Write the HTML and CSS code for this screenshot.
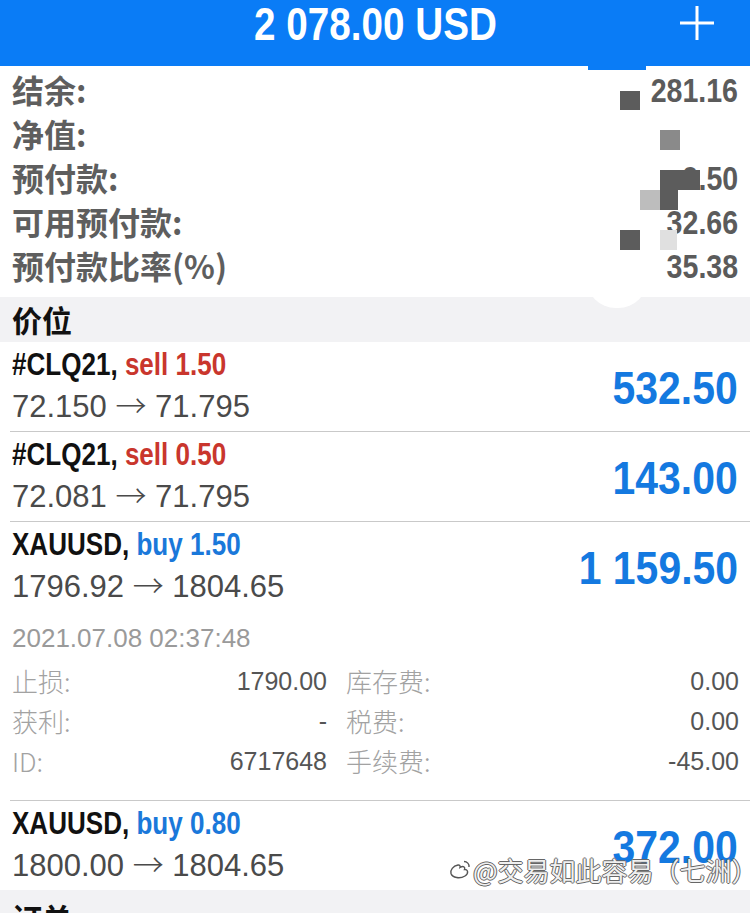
FILE: index.html
```html
<!DOCTYPE html>
<html lang="zh-CN">
<head>
<meta charset="utf-8">
<title>MT5</title>
<link rel="stylesheet" href="styles.css">
</head>
<body>
<div class="page">
  <header class="topbar">
    <div></div>
    <div class="balance"><span class="cn cn-c">2 078.00 USD</span></div>
    <div class="plus-wrap">
      <svg class="plus" width="36" height="36" viewBox="0 0 36 36"><path d="M18 1V35M1 18H35" stroke="#fff" stroke-width="3" fill="none"/></svg>
    </div>
  </header>

  <section class="summary">
    <div class="srow"><span class="slabel">结余:</span><span class="sval"><span class="cn cn-r">281.16</span></span></div>
    <div class="srow"><span class="slabel">净值:</span><span class="sval"></span></div>
    <div class="srow"><span class="slabel">预付款:</span><span class="sval"><span class="cn cn-r">9.50</span></span></div>
    <div class="srow"><span class="slabel">可用预付款:</span><span class="sval"><span class="cn cn-r">32.66</span></span></div>
    <div class="srow"><span class="slabel">预付款比率(%)</span><span class="sval"><span class="cn cn-r">35.38</span></span></div>
    <div class="mask"></div>
    <div class="mask-tab"></div>
    <div class="px px1"></div>
    <div class="px px2"></div>
    <div class="px px3"></div>
    <div class="px px4"></div>
    <div class="px px5"></div>
    <div class="px px6"></div>
    <div class="px px7"></div>
  </section>

  <div class="section-bar">价位</div>

  <div class="pos">
    <div class="pos-main">
      <div class="pos-left">
        <div class="pos-title"><span class="cn">#CLQ21, <span class="sell">sell 1.50</span></span></div>
        <div class="pos-price">72.150 <span class="arr">→</span> 71.795</div>
      </div>
      <div class="pos-profit"><span class="cn cn-r">532.50</span></div>
    </div>
  </div>

  <div class="pos">
    <div class="pos-main">
      <div class="pos-left">
        <div class="pos-title"><span class="cn">#CLQ21, <span class="sell">sell 0.50</span></span></div>
        <div class="pos-price">72.081 <span class="arr">→</span> 71.795</div>
      </div>
      <div class="pos-profit"><span class="cn cn-r">143.00</span></div>
    </div>
  </div>

  <div class="pos expanded">
    <div class="pos-main">
      <div class="pos-left">
        <div class="pos-title"><span class="cn">XAUUSD, <span class="buy">buy 1.50</span></span></div>
        <div class="pos-price">1796.92 <span class="arr">→</span> 1804.65</div>
      </div>
      <div class="pos-profit"><span class="cn cn-r">1 159.50</span></div>
    </div>
    <div class="pos-date">2021.07.08 02:37:48</div>
    <div class="details">
      <div class="dcell"><span class="dl">止损:</span><span class="dv">1790.00</span></div>
      <div class="dcell"><span class="dl">库存费:</span><span class="dv">0.00</span></div>
      <div class="dcell"><span class="dl">获利:</span><span class="dv">-</span></div>
      <div class="dcell"><span class="dl">税费:</span><span class="dv">0.00</span></div>
      <div class="dcell"><span class="dl">ID:</span><span class="dv">6717648</span></div>
      <div class="dcell"><span class="dl">手续费:</span><span class="dv">-45.00</span></div>
    </div>
  </div>

  <div class="pos last">
    <div class="pos-main">
      <div class="pos-left">
        <div class="pos-title"><span class="cn">XAUUSD, <span class="buy">buy 0.80</span></span></div>
        <div class="pos-price">1800.00 <span class="arr">→</span> 1804.65</div>
      </div>
      <div class="pos-profit"><span class="cn cn-r">372.00</span></div>
    </div>
    <div class="watermark">
      <svg class="wb" width="24" height="22" viewBox="0 0 24 22"><path d="M10 6C5 7 2 11 3 14.5 4.5 19 12 20 17 17 21 14.5 20 10 16.5 10.5 17.5 8 15.5 6.5 12 8.5 12.5 6.5 11.5 5.8 10 6Z" fill="none" stroke="#555" stroke-width="1.4"/><path d="M16 2.5C19 2.5 21.5 5 21 8" fill="none" stroke="#555" stroke-width="1.4"/></svg>
      <span>@交易如此容易（七洲）</span>
    </div>
  </div>

  <div class="section-bar bottom">订单</div>
</div>
</body>
</html>
```

FILE: styles.css
```css
html, body {
  margin: 0;
  padding: 0;
  background: #fff;
}
.page {
  width: 750px;
  height: 913px;
  overflow: hidden;
  position: relative;
  font-family: "Liberation Sans", "Noto Sans CJK SC", sans-serif;
}
/* condensed bold face emulation */
.cn {
  display: inline-block;
  transform: scaleX(0.84);
  transform-origin: left center;
  white-space: nowrap;
}
.cn-r { transform-origin: right center; }
.cn-c { transform-origin: center center; }

.topbar {
  height: 66px;
  background: #0a7cf6;
  display: grid;
  grid-template-columns: 1fr auto 1fr;
  align-items: start;
}
.balance {
  color: #fff;
  font-weight: 700;
  font-size: 46px;
  line-height: 48px;
}
.plus-wrap {
  display: flex;
  justify-content: flex-end;
  padding-right: 35px;
  padding-top: 5px;
}
.plus { display: block; }
.summary {
  position: relative;
  padding: 1px 12px 10px 12px;
}
.srow {
  display: flex;
  justify-content: space-between;
  align-items: center;
  height: 44px;
}
.slabel {
  font-family: "Noto Sans CJK SC", sans-serif;
  font-weight: 700;
  font-size: 32px;
  color: #5e5e5e;
}
.sval {
  font-weight: 700;
  font-size: 34px;
  color: #5b5b5b;
  padding-top: 3px;
}
.mask {
  position: absolute;
  left: 586px;
  top: 0;
  width: 62px;
  height: 242px;
  background: #fff;
  border-radius: 0 0 30px 30px;
}
.mask-tab {
  position: absolute;
  left: 588px;
  top: -1px;
  width: 58px;
  height: 5px;
  background: #0a7cf6;
}
.px { position: absolute; }
.px1 { left: 620px; top: 25px; width: 20px; height: 19px; background: #5c5c5c; }
.px2 { left: 660px; top: 64px; width: 20px; height: 20px; background: #8a8a8a; }
.px3 { left: 660px; top: 104px; width: 40px; height: 20px; background: #5c5c5c; }
.px4 { left: 660px; top: 124px; width: 18px; height: 20px; background: #5c5c5c; }
.px5 { left: 640px; top: 124px; width: 20px; height: 20px; background: #bdbdbd; }
.px6 { left: 620px; top: 164px; width: 20px; height: 20px; background: #5c5c5c; }
.px7 { left: 660px; top: 164px; width: 17px; height: 20px; background: #e0e0e0; }

.section-bar {
  background: #f2f2f4;
  height: 45px;
  line-height: 45px;
  padding-left: 12px;
  font-family: "Noto Sans CJK SC", sans-serif;
  font-weight: 700;
  font-size: 30px;
  color: #111;
}
.section-bar.bottom {
  line-height: 54px;
}
.pos {
  position: relative;
  margin-left: 10px;
  border-bottom: 1px solid #c9c9c9;
}
.pos.last {
  border-bottom: none;
}
.pos-main {
  display: flex;
  justify-content: space-between;
  align-items: center;
  height: 89px;
  padding-right: 12px;
}
.pos-left {
  padding-left: 2px;
  padding-top: 1px;
}
.pos-title {
  font-weight: 700;
  font-size: 31px;
  line-height: 36px;
  color: #111;
}
.sell { color: #c9362d; }
.buy { color: #1a78da; }
.pos-price {
  font-size: 31px;
  line-height: 42px;
  color: #4a4a4a;
}
.arr {
  font-family: "Noto Sans CJK SC", sans-serif;
  font-weight: 300;
  font-size: 31px;
}
.pos-profit {
  font-weight: 700;
  font-size: 46px;
  color: #1479e0;
  padding-top: 2px;
}
.pos-profit .cn {
  transform: scaleX(0.89);
}
.pos-date {
  padding: 7px 0 0 2px;
  height: 43px;
  line-height: 40px;
  font-size: 26px;
  color: #9a9a9a;
}
.details {
  display: grid;
  grid-template-columns: 315px 1fr;
  column-gap: 19px;
  padding: 0 11px 19px 2px;
}
.dcell {
  display: flex;
  justify-content: space-between;
  height: 40px;
  line-height: 40px;
  font-size: 25px;
}
.dl {
  font-family: "Noto Sans CJK SC", sans-serif;
  font-weight: 300;
  color: #a2a2a2;
  font-size: 26px;
}
.dv {
  color: #555;
}
.watermark {
  position: absolute;
  left: 438px;
  top: 50px;
  display: flex;
  align-items: center;
  gap: 1px;
  font-family: "Noto Sans CJK SC", sans-serif;
  font-size: 26px;
  color: rgba(255,255,255,0.92);
  text-shadow: 1px 0 0 #666, -1px 0 0 #666, 0 1px 0 #666, 0 -1px 0 #666;
  white-space: nowrap;
}
```
